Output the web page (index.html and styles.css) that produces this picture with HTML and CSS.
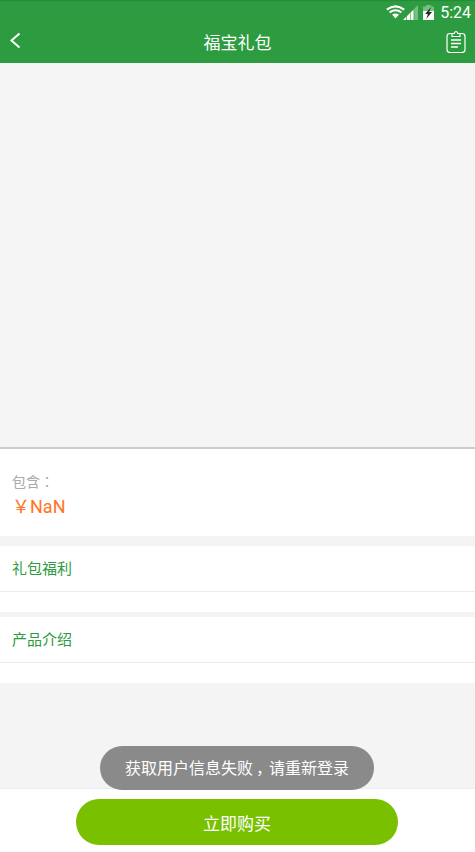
FILE: index.html
```html
<!DOCTYPE html>
<html>
<head>
  <meta charset="utf-8"/>
  <title>福宝礼包</title>
  <link rel="stylesheet" href="styles.css">
</head>
<body>

<div class="page">
  <header class="topbar">
    <div class="status">
      <svg class="wifi" width="19" height="14" viewBox="0 0 19 14">
        <path d="M0.8 4.6 Q9.5 -2 18.2 4.6" fill="none" stroke="#fff" stroke-width="2.2"/>
        <path d="M3.6 7.4 Q9.5 3 15.4 7.4" fill="none" stroke="#fff" stroke-width="2"/>
        <path d="M6 9.6 Q9.5 7.2 13 9.6 L9.5 13.5 Z" fill="#fff"/>
      </svg>
      <svg class="signal" width="15" height="15" viewBox="0 0 15 15">
        <path d="M0 15 H3.4 V11.6 Z M4 15 H7 V8 L4 11 Z M7.6 15 H10.6 V4.4 L7.6 7.4 Z" fill="#fff"/>
        <path d="M11.2 15 H15 V0 L11.2 3.8 Z" fill="#fff" opacity="0.35"/>
      </svg>
      <svg class="battery" width="11" height="15" viewBox="0 0 11 15">
        <path d="M3 0 H8 V1.5 H11 V15 H0 V1.5 H3 Z" fill="#fff" opacity="0.35"/>
        <path d="M0 6 H11 V15 H0 Z" fill="#fff"/>
        <path d="M8 2 L2.2 9 H5 L3.2 14 L9 7 H6.2 Z" fill="#1f2a22"/>
      </svg>
      <span class="clock">5:24</span>
    </div>
    <div class="navbar">
      <div class="nav-left">
        <svg class="back" width="12" height="18" viewBox="0 0 12 18">
          <path d="M10.5 1.5 L2.5 8.5 L10.5 15.5" fill="none" stroke="#fff" stroke-width="2"/>
        </svg>
      </div>
      <h1>福宝礼包</h1>
      <div class="nav-right">
        <svg class="orders" width="20" height="23" viewBox="0 0 20 23">
          <path d="M6 3.5 H4 Q1 3.5 1 6.5 V19.5 Q1 22.5 4 22.5 H16 Q19 22.5 19 19.5 V6.5 Q19 3.5 16 3.5 H14" fill="none" stroke="#fff" stroke-width="1.2"/>
          <path d="M6 6.5 V3.5 H8 Q10 -0.5 12 3.5 H14 V6.5 Z" fill="none" stroke="#fff" stroke-width="1.2"/>
          <path d="M5 10 H15 M5 13.5 H15 M5 17 H12" stroke="#fff" stroke-width="1.3"/>
        </svg>
      </div>
    </div>
  </header>

  <div class="cover"></div>

  <section class="info">
    <div class="includes">包含：</div>
    <div class="price">￥NaN</div>
  </section>

  <section class="block block-first">
    <div class="block-title">礼包福利</div>
  </section>

  <section class="block">
    <div class="block-title">产品介绍</div>
  </section>

  <div class="spacer"></div>

  <footer class="buybar">
    <button class="buy">立即购买</button>
  </footer>

  <div class="toast">获取用户信息失败<span class="comma">，</span>请重新登录</div>
</div>

</body>
</html>
```

FILE: styles.css
```css
html, body {
  margin: 0;
  padding: 0;
}
body {
  font-family: Roboto, "Noto Sans CJK SC", sans-serif;
  background: #f4f4f4;
}
.page {
  position: relative;
  display: flex;
  flex-direction: column;
  height: 852px;
  overflow: hidden;
}
.topbar {
  height: 63px;
  background: #2d9b40;
  color: #fff;
  flex: none;
  box-shadow: inset 0 2px 1px -1px #278a39;
}
.status {
  display: flex;
  align-items: center;
  justify-content: flex-end;
  height: 24px;
  padding-right: 4px;
}
.signal {
  margin-left: -2px;
}
.battery {
  margin-left: 5px;
}
.clock {
  font-size: 16px;
  margin-left: 6px;
}
.navbar {
  display: grid;
  grid-template-columns: 1fr auto 1fr;
  align-items: center;
  height: 34px;
  padding: 0 9px;
}
.nav-left {
  display: flex;
}
.nav-right {
  display: flex;
  justify-content: flex-end;
}
.navbar h1 {
  margin: 0;
  font-size: 17px;
  font-weight: normal;
}
.cover {
  height: 384px;
  flex: none;
  background: #f5f5f5;
  border-bottom: 2px solid #ccc;
}
.info {
  height: 87px;
  flex: none;
  background: #fff;
  padding: 0 12px;
  box-sizing: border-box;
  padding-top: 24px;
}
.includes {
  font-family: Roboto, "Noto Sans CJK TC", sans-serif;
  font-size: 14px;
  line-height: 18px;
  color: #aaa;
}
.price {
  font-size: 18px;
  line-height: 26px;
  margin-top: 3px;
  color: #ff7424;
}
.block {
  flex: none;
  height: 66px;
  background: #fff;
  margin-top: 5px;
}
.block-first {
  margin-top: 10px;
}
.block-title {
  height: 45px;
  line-height: 47px;
  padding-left: 12px;
  font-size: 15px;
  color: #2d9b40;
  border-bottom: 1px solid #e2eeee;
}
.spacer {
  flex: 1;
}
.buybar {
  flex: none;
  height: 64px;
  box-sizing: border-box;
  background: #fff;
  border-top: 1px solid #e8eeee;
  display: flex;
  justify-content: center;
  padding: 10px 1px 0 0;
}
.buy {
  width: 322px;
  height: 46px;
  border: none;
  border-radius: 23px;
  background: #78c000;
  color: #fff;
  font-family: inherit;
  font-size: 17px;
}
.toast {
  position: absolute;
  left: 100px;
  top: 746px;
  width: 274px;
  height: 44px;
  line-height: 45px;
  border-radius: 22px;
  background: #8a8a8a;
  color: #fff;
  font-size: 16px;
  text-align: center;
}
.comma {
  display: inline-block;
  width: 16px;
  text-align: center;
  font-feature-settings: "palt";
}
```
